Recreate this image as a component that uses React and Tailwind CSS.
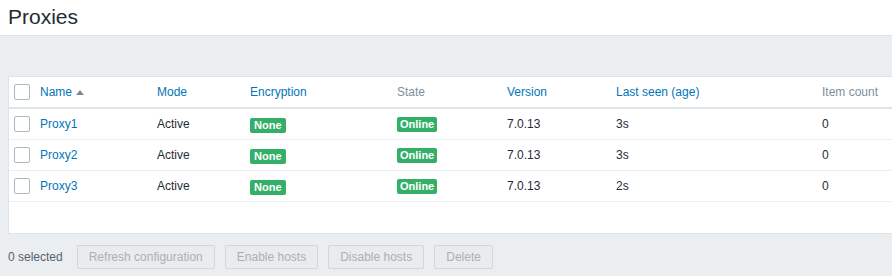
const cols = "grid grid-cols-[26px_117px_93px_147px_110px_109px_206px_1fr]";

const rows = [
  { name: "Proxy1", seen: "3s" },
  { name: "Proxy2", seen: "3s" },
  { name: "Proxy3", seen: "2s" },
];

function Checkbox() {
  return <span className="block w-4 h-4 rounded-[2px] border border-[#acbbc2] bg-white" />;
}

function Badge({ children, wide }) {
  return (
    <span
      className={
        wide
          ? "inline-block px-[4px] leading-[15px] rounded-[2px] bg-[#34af67] text-white font-bold text-[11px]"
          : "inline-block px-[3px] leading-[15px] rounded-[2px] bg-[#34af67] text-white font-bold text-[11px]"
      }
    >
      {children}
    </span>
  );
}

export default function App() {
  return (
    <div
      className="w-[892px] h-[276px] overflow-hidden bg-[#ebeef0] text-[12px] text-[#1f2c33]"
      style={{ fontFamily: '"Liberation Sans", Arial, sans-serif' }}
    >
      <div className="h-9 bg-white border-b border-[#dfe4e7] px-2 flex items-center">
        <h1 className="text-[21px] leading-none text-[#1f2c33] -mt-[2px]">Proxies</h1>
      </div>

      <div className="pt-[40px] pl-2">
        <div className="w-[900px] bg-white border border-[#dfe4e7]">
          <div className={`${cols} h-[32px] items-center border-b-2 border-[#dfe4e7]`}>
            <div className="pl-[5px]"><Checkbox /></div>
            <div className="pl-[5px] text-[#0275b8] flex items-center gap-[4px]">
              Name
              <svg width="8" height="5" viewBox="0 0 8 5" className="mt-[1px]">
                <path d="M0 5 L4 0 L8 5 Z" fill="#768d99" />
              </svg>
            </div>
            <div className="pl-[5px] text-[#0275b8]">Mode</div>
            <div className="pl-[5px] text-[#0275b8]">Encryption</div>
            <div className="pl-[5px] text-[#7f8f98]">State</div>
            <div className="pl-[5px] text-[#0275b8]">Version</div>
            <div className="pl-[5px] text-[#0275b8]">Last seen (age)</div>
            <div className="pl-[5px] text-[#7f8f98]">Item count</div>
          </div>

          {rows.map((r) => (
            <div key={r.name} className={`${cols} h-[31px] items-center border-b border-[#ebeef0]`}>
              <div className="pl-[5px]"><Checkbox /></div>
              <div className="pl-[5px] text-[#0275b8]">{r.name}</div>
              <div className="pl-[5px]">Active</div>
              <div className="pl-[5px] pt-[1px]"><Badge wide>None</Badge></div>
              <div className="pl-[5px]"><Badge>Online</Badge></div>
              <div className="pl-[5px]">7.0.13</div>
              <div className="pl-[5px]">{r.seen}</div>
              <div className="pl-[5px]">0</div>
            </div>
          ))}

          <div className="h-[31px]" />
        </div>
      </div>

      <div className="pl-2 pt-[11px] flex items-center">
        <span className="text-[#55636c] mr-[14px]">0 selected</span>
        <div className="flex gap-[10px]">
          {["Refresh configuration", "Enable hosts", "Disable hosts", "Delete"].map((b) => (
            <button
              key={b}
              className="h-6 px-[11px] border border-[#d3d7d9] rounded-[2px] bg-[#e9ebed] text-[#a9b1b6] text-[12px]"
            >
              {b}
            </button>
          ))}
        </div>
      </div>
    </div>
  );
}
